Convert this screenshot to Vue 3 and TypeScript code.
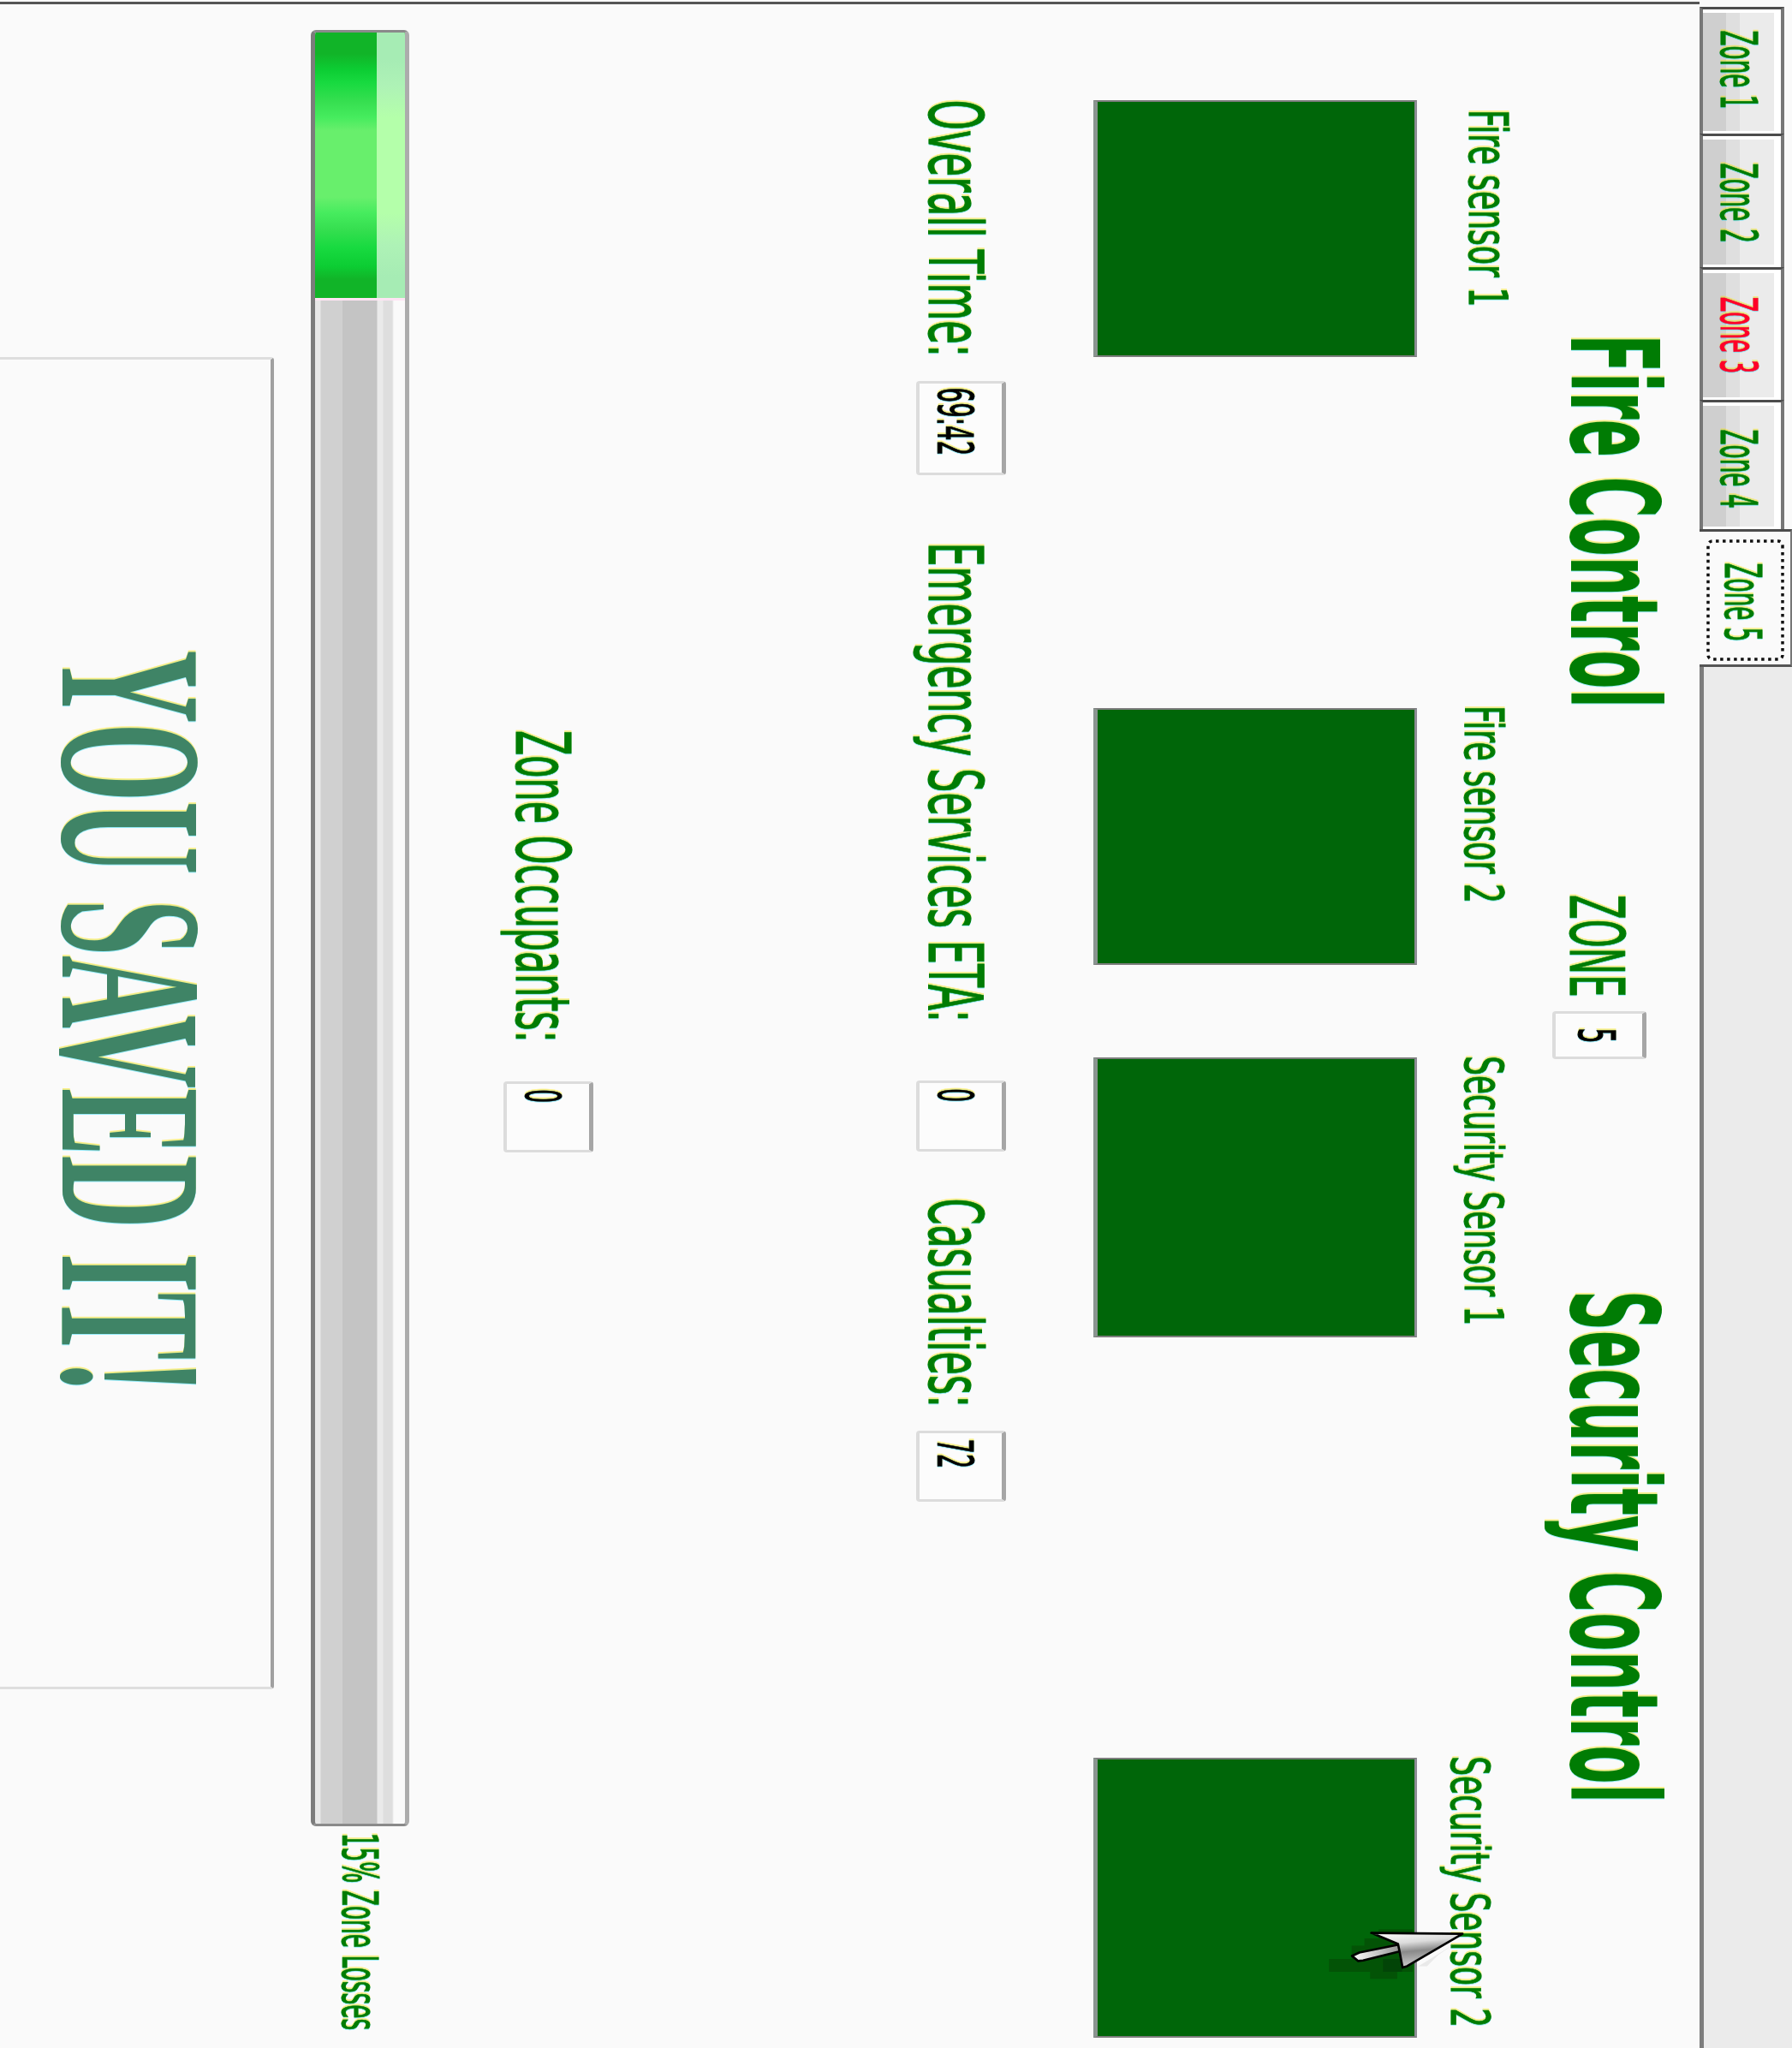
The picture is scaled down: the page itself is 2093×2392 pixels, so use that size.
<script setup lang="ts">
import { h } from 'vue'

interface FitProps {
  text: string
  w: number
  cap: number
  bold?: boolean
  serif?: boolean
}

const ctx = document.createElement('canvas').getContext('2d')!

// Text condensed so that its ink spans exactly `w`, with capitals `cap` tall.
const FitText = (p: FitProps) => {
  const family = p.serif ? '"Liberation Serif", serif' : '"DejaVu Sans", sans-serif'
  const size = p.cap / (p.serif ? 0.655 : 0.729)
  const weight = p.bold ? 700 : 400
  ctx.font = `${weight} ${size}px ${family}`
  const m = ctx.measureText(p.text)
  const ink = m.actualBoundingBoxLeft + m.actualBoundingBoxRight
  const scale = (p.w - 1) / ink
  return h('svg', { width: p.w, height: p.cap, class: 'fit' }, [
    h(
      'text',
      {
        x: m.actualBoundingBoxLeft + 1.5 / scale,
        y: p.cap,
        fill: 'currentColor',
        stroke: 'currentColor',
        'stroke-width': p.bold || p.serif ? 0 : 1,
        'font-family': family,
        'font-size': size,
        'font-weight': weight,
        transform: `scale(${scale} 1)`,
      },
      p.text,
    ),
  ])
}
FitText.props = {
  text: { type: String, required: true },
  w: { type: Number, required: true },
  cap: { type: Number, required: true },
  bold: Boolean,
  serif: Boolean,
}

const tabs = [
  { text: 'Zone 1', size: 148, pad: 24, w: 90, cls: '' },
  { text: 'Zone 2', size: 156, pad: 31, w: 91, cls: '' },
  { text: 'Zone 3', size: 155, pad: 31, w: 88, cls: 'alarm' },
  { text: 'Zone 4', size: 151, pad: 31, w: 91, cls: '' },
  { text: 'Zone 5', size: 161, pad: 36, w: 90, cls: 'active' },
]

const sensors = [
  { text: 'Fire sensor 1', w: 225, cls: 'fire-1' },
  { text: 'Fire sensor 2', w: 225, cls: 'fire-2' },
  { text: 'Security Sensor 1', w: 311, cls: 'security-1' },
  { text: 'Security Sensor 2', w: 312, cls: 'security-2' },
]
</script>

<template>
  <div class="screen">
    <div class="stage">
      <div class="tabs">
        <div
          v-for="t in tabs"
          :key="t.text"
          class="tab"
          :class="t.cls"
          :style="{ width: t.size + 'px', paddingLeft: t.pad + 'px' }"
        >
          <FitText :text="t.text" :w="t.w" :cap="43" />
          <svg v-if="t.cls === 'active'" class="focus" width="142" height="91">
            <rect x="2" y="2" width="138" height="87" rx="5" />
          </svg>
        </div>
        <div class="strip"></div>
      </div>

      <div class="panel">
        <div class="heading">
          <FitText class="h-fire" text="Fire Control" :w="426" :cap="104" bold />
          <FitText class="h-zone" text="ZONE" :w="117" :cap="63" />
          <div class="field f-zone"><FitText text="5" :w="15" :cap="43" /></div>
          <FitText class="h-security" text="Security Control" :w="590" :cap="104" bold />
        </div>

        <div class="sensors">
          <div v-for="s in sensors" :key="s.text" class="sensor" :class="s.cls">
            <div class="caption"><FitText :text="s.text" :w="s.w" :cap="46" /></div>
            <div class="lamp"></div>
          </div>
        </div>

        <div class="stats">
          <FitText class="s-time" text="Overall Time:" :w="295" :cap="63" />
          <div class="field f-time"><FitText text="69:42" :w="76" :cap="42" /></div>
          <FitText class="s-eta" text="Emergency Services ETA:" :w="553" :cap="63" />
          <div class="field f-eta"><FitText text="0" :w="14" :cap="42" /></div>
          <FitText class="s-cas" text="Casualties:" :w="239" :cap="63" />
          <div class="field f-cas"><FitText text="72" :w="31" :cap="42" /></div>
        </div>

        <div class="occupants">
          <FitText class="o-label" text="Zone Occupants:" :w="360" :cap="63" />
          <div class="field f-occ"><FitText text="0" :w="14" :cap="42" /></div>
        </div>

        <div class="losses">
          <div class="bar"><div class="fill"></div></div>
          <FitText class="l-label" text="15% Zone Losses" :w="228" :cap="42" />
        </div>

        <div class="message">
          <FitText text="YOU SAVED IT!" :w="857" :cap="156" bold serif />
        </div>
      </div>
    </div>

    <svg class="cursor" viewBox="150 600 500 220" width="167" height="73">
      <defs>
        <linearGradient id="head" x1="0" y1="0" x2="0.25" y2="1">
          <stop offset="0" stop-color="#ffffff" />
          <stop offset="0.35" stop-color="#dcdcdc" />
          <stop offset="0.6" stop-color="#8a8a8a" />
          <stop offset="1" stop-color="#c8c8c8" />
        </linearGradient>
        <linearGradient id="tail" x1="0" y1="0" x2="1" y2="0">
          <stop offset="0" stop-color="#ffffff" />
          <stop offset="1" stop-color="#8f8f8f" />
        </linearGradient>
      </defs>
      <path d="M155 745H235V698H280V672H330V640H450V790H395V815H300V790H155Z" fill="#044d06" opacity=".75" />
      <path d="M345 745H415L412 790H345Z" fill="#033f08" opacity=".7" />
      <path d="M470 770L600 690L540 730L500 770Z" fill="#dddddd" opacity=".6" />
      <path d="M236 734L262 722L400 694L412 716L275 750L258 752Z" fill="url(#tail)" stroke="#000" stroke-width="8" stroke-linejoin="round" />
      <path d="M304 653L625 656L430 770L414 775L403 716L398 692Z" fill="url(#head)" stroke="#000" stroke-width="8" stroke-linejoin="round" />
    </svg>
  </div>
</template>

<style>
html,
body {
  margin: 0;
  background: #fafafa;
}
</style>

<style scoped>
.screen {
  position: relative;
  width: 2093px;
  height: 2392px;
  overflow: hidden;
  background: #fafafa;
}
.stage {
  display: flex;
  flex-direction: column;
  width: 2392px;
  height: 2093px;
  transform-origin: 0 0;
  transform: translateX(2093px) rotate(90deg);
  color: #007c04;
}
.fit {
  display: block;
  flex: none;
  overflow: visible;
  filter: drop-shadow(-1.5px 0 0 rgba(255, 225, 0, 0.45)) drop-shadow(1.5px 0 0 rgba(0, 215, 255, 0.4));
}
.tabs {
  display: flex;
  flex: none;
  height: 108px;
  padding-left: 8px;
  box-sizing: border-box;
}
.tab {
  position: relative;
  flex: none;
  box-sizing: border-box;
  height: 99px;
  margin-top: 9px;
  padding-top: 27px;
  border-top: 4px solid #777;
  border-bottom: 4px solid #777;
  border-left: 3px solid #4c4c4c;
  box-shadow: inset 0 8px #fff, inset 4px 0 #fff, inset -3px 0 #fff;
  background: linear-gradient(#ebebeb 0 48px, #dfdfdf 48px 64px, #cfcfcf 64px);
}
.tab.alarm {
  color: #ff0028;
}
.tab.active {
  height: 108px;
  margin-top: 0;
  padding-top: 33px;
  border-top: 2px solid #777;
  border-bottom: 0;
  border-right: 3px solid #555;
  background: #fafafa;
  box-shadow: none;
}
.focus {
  position: absolute;
  left: 9px;
  top: 7px;
}
.focus rect {
  fill: none;
  stroke: #111;
  stroke-width: 3.5;
  stroke-dasharray: 3.5 4.5;
}
.strip {
  flex: 1;
  height: 108px;
  box-sizing: border-box;
  border-bottom: 5px solid #7d7d7d;
  background: #ebebeb;
}
.panel {
  display: flex;
  flex-direction: column;
  flex: 1;
  margin-left: 2px;
  border-left: 3px solid #555;
}
.panel > * {
  margin-left: -5px;
}
.heading,
.sensors,
.stats,
.occupants,
.losses {
  display: flex;
  flex: none;
  align-items: flex-start;
}
.heading {
  height: 125px;
  margin-top: 46px;
}
.h-fire {
  margin-left: 395px;
}
.h-zone {
  margin-left: 224px;
  margin-top: 42px;
}
.h-security {
  margin-left: 273px;
}
.field {
  flex: none;
  box-sizing: border-box;
  height: 105px;
  margin-bottom: -1px;
  color: #000;
  border: 3px solid #dcdcdc;
  border-top: 5px solid #a6a6a6;
  border-bottom-width: 4px;
  border-radius: 4px;
  background: #fcfcfc;
  padding: 33px 0 0 6px;
}
.f-zone {
  width: 56px;
  height: 110px;
  margin: 16px 0 0 19px;
  padding: 31px 0 0 17px;
}
.sensors {
  margin-top: 21px;
}
.sensor {
  flex: none;
}
.caption {
  display: flex;
  align-items: flex-start;
  height: 138px;
  box-sizing: border-box;
  padding-top: 36px;
}
.lamp {
  height: 378px;
  box-sizing: border-box;
  background: #006609;
  border: 2px solid #7d7d7d;
  border-top: 3px solid #8c8c94;
  border-bottom: 5px solid #8a9490;
}
.fire-1 {
  width: 300px;
  margin-left: 117px;
}
.fire-1 .caption {
  padding: 31px 0 0 13px;
}
.fire-2 {
  width: 300px;
  margin-left: 410px;
}
.fire-2 .caption,
.security-2 .caption {
  margin-left: -1px;
}
.security-1 {
  width: 327px;
  margin-left: 108px;
}
.security-1 .caption {
  margin-left: -1px;
}
.security-2 {
  width: 327px;
  margin-left: 491px;
}
.security-2 .caption {
  padding-top: 52px;
}
.stats {
  margin-top: 102px;
}
.s-time,
.s-eta,
.s-cas {
  margin-top: 27px;
}
.s-time {
  margin-left: 117px;
}
.f-time {
  width: 110px;
  margin-left: 33px;
  padding-left: 5px;
}
.s-eta {
  margin-left: 81px;
}
.f-eta {
  width: 83px;
  margin-left: 73px;
}
.s-cas {
  margin-left: 55px;
}
.f-cas {
  width: 83px;
  margin-left: 32px;
  padding-left: 7px;
}
.occupants {
  margin-top: 378px;
}
.o-label {
  margin-left: 853px;
  margin-top: 27px;
}
.f-occ {
  width: 83px;
  margin-left: 50px;
}
.losses {
  margin-top: 111px;
}
.bar {
  flex: none;
  box-sizing: border-box;
  width: 2098px;
  height: 115px;
  margin-left: 35px;
  border: 3px solid #8a8a8a;
  border-top: 5px solid #acacac;
  border-bottom: 5px solid #7c7c7c;
  border-radius: 6px;
  overflow: hidden;
  background: linear-gradient(#fafafa 0 13px, #dedede 15px 25px, #eaeaea 26px 32px, #c4c4c4 33px 73px, #d0d0d0 73px 98px, #e8e8e8 99px);
}
.fill {
  width: 313px;
  height: 100%;
  box-sizing: border-box;
  border-right: 3px solid #ffe4f4;
  background:
    linear-gradient(90deg, #a6ecb4 0 10%, #aef2b6 20%, #b4ffaa 32% 68%, #aef2b6 80%, #a6ecb4 92%) top / 100% 33px no-repeat,
    linear-gradient(90deg, #11b428 0 8%, #0ccd33 14%, #18da40 19%, #36df50 26%, #46ec5e 32%, #68ef6c 37% 62%, #46ec5e 68%, #36df50 74%, #18da40 81%, #0ccd33 88%, #11b428 93%);
}
.l-label {
  margin-left: 9px;
  margin-top: 36px;
}
.message {
  flex: 1;
  box-sizing: border-box;
  width: 1556px;
  margin: 43px 0 -10px 412px;
  padding: 87px 0 0 340px;
  border: 3px solid #dedede;
  border-top: 4px solid #a0a0a0;
  border-radius: 4px;
  color: #3f8466;
}
.cursor {
  position: absolute;
  left: 1550px;
  top: 2240px;
}
</style>
